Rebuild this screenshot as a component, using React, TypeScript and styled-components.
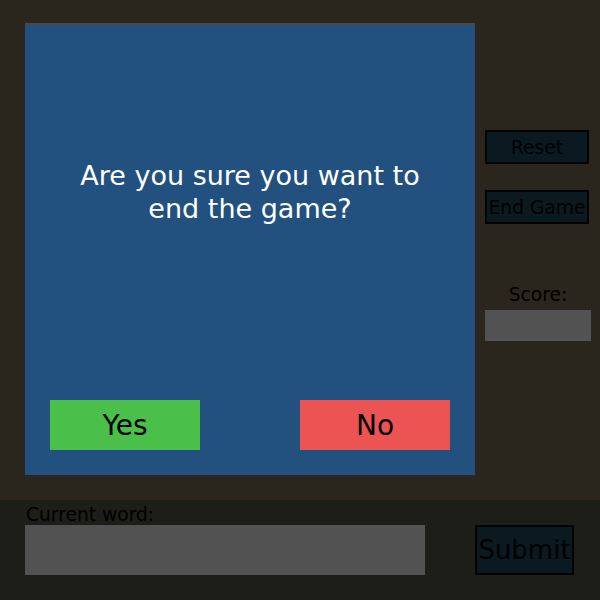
import React from "react";
import styled, { createGlobalStyle } from "styled-components";

const GlobalStyle = createGlobalStyle`
  html, body {
    margin: 0;
    padding: 0;
    background: #2a261d;
    font-family: "DejaVu Sans", "Liberation Sans", sans-serif;
  }
`;

const App = () => {
  return (
    <>
      <GlobalStyle />
      <Page>
        <Game>
          <Board />
          <Sidebar>
            <SideButton>Reset</SideButton>
            <SideButton $gap={26}>End Game</SideButton>
            <ScoreLabel>Score:</ScoreLabel>
            <ScoreBox />
          </Sidebar>
        </Game>

        <BottomBar>
          <WordLabel>Current word:</WordLabel>
          <WordRow>
            <WordInput />
            <SubmitButton>Submit</SubmitButton>
          </WordRow>
        </BottomBar>

        <Modal>
          <Question>
            Are you sure you want to
            <br />
            end the game?
          </Question>
          <Choices>
            <Choice $color="#4abf4a">Yes</Choice>
            <Choice $color="#ec5353">No</Choice>
          </Choices>
        </Modal>
      </Page>
    </>
  );
};

export default App;

const Page = styled.div`
  position: relative;
  width: 600px;
  height: 600px;
  display: flex;
  flex-direction: column;
  overflow: hidden;
`;

const Game = styled.div`
  height: 500px;
  display: flex;
  padding-left: 25px;
  box-sizing: border-box;
`;

const Board = styled.div`
  width: 450px;
  margin-top: 25px;
  height: 450px;
`;

const Sidebar = styled.div`
  width: 106px;
  margin-left: 10px;
  display: flex;
  flex-direction: column;
  align-items: flex-start;
  padding-top: 130px;
`;

const SideButton = styled.button<{ $gap?: number }>`
  width: 104px;
  height: 34px;
  margin-top: ${(p) => p.$gap ?? 0}px;
  padding: 0;
  background: #0b1a21;
  border: 2px solid #030303;
  color: #000000;
  font-family: "DejaVu Sans", sans-serif;
  font-size: 18.67px;
  white-space: nowrap;
`;

const ScoreLabel = styled.div`
  width: 106px;
  margin-top: 60px;
  text-align: center;
  font-size: 18.67px;
  line-height: 22px;
  color: #000000;
`;

const ScoreBox = styled.div`
  width: 106px;
  height: 31px;
  margin-top: 4px;
  background: #525252;
`;

const BottomBar = styled.div`
  height: 100px;
  background: #1e1e19;
  padding: 5px 25px 0;
  box-sizing: border-box;
`;

const WordLabel = styled.div`
  font-size: 18.67px;
  line-height: 20px;
  color: #000000;
  padding-left: 1px;
`;

const WordRow = styled.div`
  display: flex;
  gap: 50px;
`;

const WordInput = styled.div`
  width: 400px;
  height: 50px;
  background: #525252;
`;

const SubmitButton = styled.button`
  width: 99px;
  height: 50px;
  padding: 0;
  background: #0b1a21;
  border: 2px solid #030303;
  color: #000000;
  font-family: "DejaVu Sans", sans-serif;
  font-size: 26px;
`;

const Modal = styled.div`
  position: absolute;
  left: 25px;
  top: 23px;
  width: 450px;
  height: 452px;
  box-sizing: border-box;
  background: #23517f;
  border-top: 2px solid #4a4a4a;
  display: flex;
  flex-direction: column;
  justify-content: space-between;
  padding: 134px 25px 25px;
`;

const Question = styled.div`
  color: #ffffff;
  font-size: 27px;
  line-height: 33px;
  text-align: center;
`;

const Choices = styled.div`
  display: flex;
  justify-content: space-between;
`;

const Choice = styled.button<{ $color: string }>`
  width: 150px;
  height: 50px;
  padding: 0;
  border: none;
  background: ${(p) => p.$color};
  color: #000000;
  font-family: "DejaVu Sans", sans-serif;
  font-size: 28px;
`;
